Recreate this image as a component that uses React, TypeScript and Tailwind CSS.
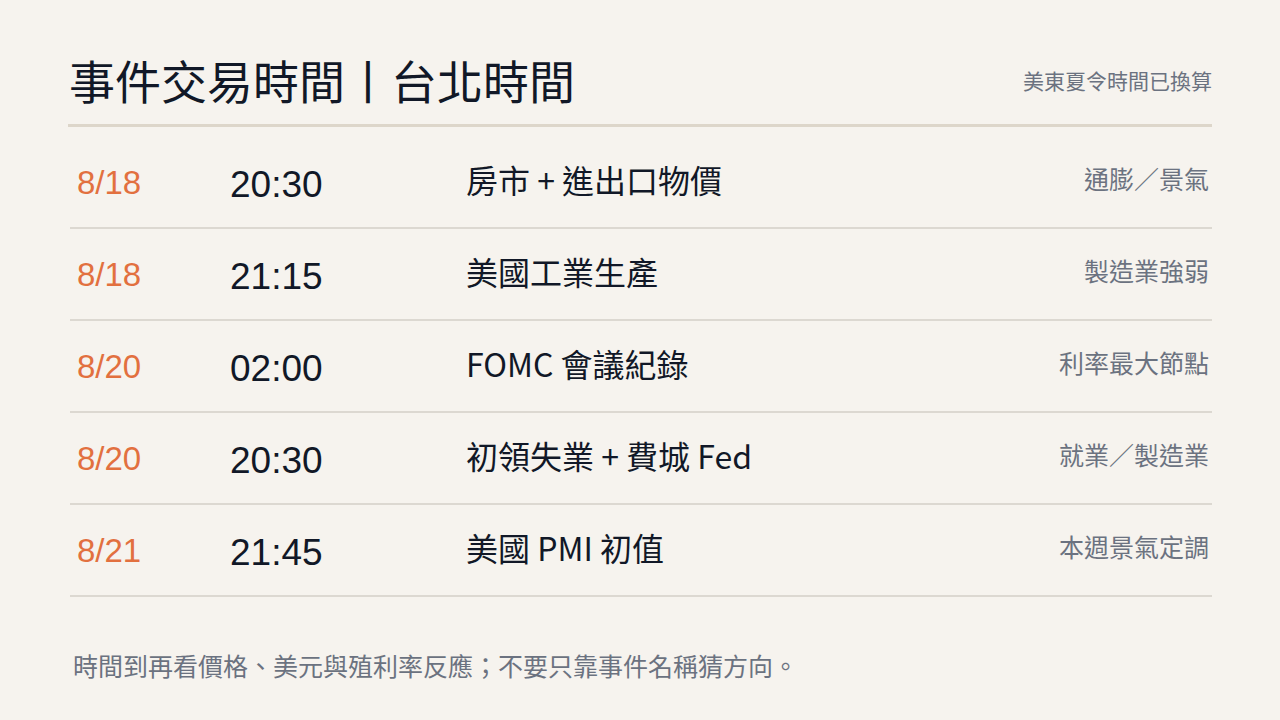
const rows = [
  { date: '8/18', time: '20:30', event: '房市 + 進出口物價', tag: '通膨／景氣' },
  { date: '8/18', time: '21:15', event: '美國工業生產', tag: '製造業強弱' },
  { date: '8/20', time: '02:00', event: 'FOMC 會議紀錄', tag: '利率最大節點' },
  { date: '8/20', time: '20:30', event: '初領失業 + 費城 Fed', tag: '就業／製造業' },
  { date: '8/21', time: '21:45', event: '美國 PMI 初值', tag: '本週景氣定調' },
];

const cjk = "font-['Noto_Sans_CJK_TC','Noto_Sans',sans-serif]";

export default function App() {
  return (
    <div className="w-[1280px] h-[720px] bg-[#f6f3ee] px-[68px] pt-[48px] overflow-hidden">
      {/* Header */}
      <div className="flex items-end justify-between pb-[14px] border-b-[3px] border-[#ddd6ca]">
        <h1 className={`${cjk} text-[46px] leading-[62px] font-normal text-[#111827] pl-[1px]`}>
          事件交易時間丨台北時間
        </h1>
        <span className={`${cjk} text-[21px] leading-[28px] text-[#6b7280] mb-[16px]`}>美東夏令時間已換算</span>
      </div>

      {/* Rows */}
      <div className="mt-[10px] pl-[2px]">
        {rows.map((r, i) => (
          <div key={i} className="h-[92px] flex items-center border-b-2 border-[#dcd8d1]">
            <span className="w-[160px] pl-[7px] font-['Liberation_Sans',sans-serif] text-[33px] text-[#e2703f] mt-[2px]">{r.date}</span>
            <span className="w-[236px] font-['Liberation_Sans',sans-serif] text-[37px] text-[#111827] mt-[6px]">{r.time}</span>
            <span className={`${cjk} flex-1 text-[32px] text-[#111827] -mt-[6px]`}>{r.event}</span>
            <span className={`${cjk} text-[25px] text-[#6b7280] pr-[3px] -mt-[6px]`}>{r.tag}</span>
          </div>
        ))}
      </div>

      {/* Footer */}
      <p className={`${cjk} mt-[50px] pl-[5px] text-[25px] text-[#6b7280]`}>
        時間到再看價格、美元與殖利率反應；不要只靠事件名稱猜方向。
      </p>
    </div>
  );
}
